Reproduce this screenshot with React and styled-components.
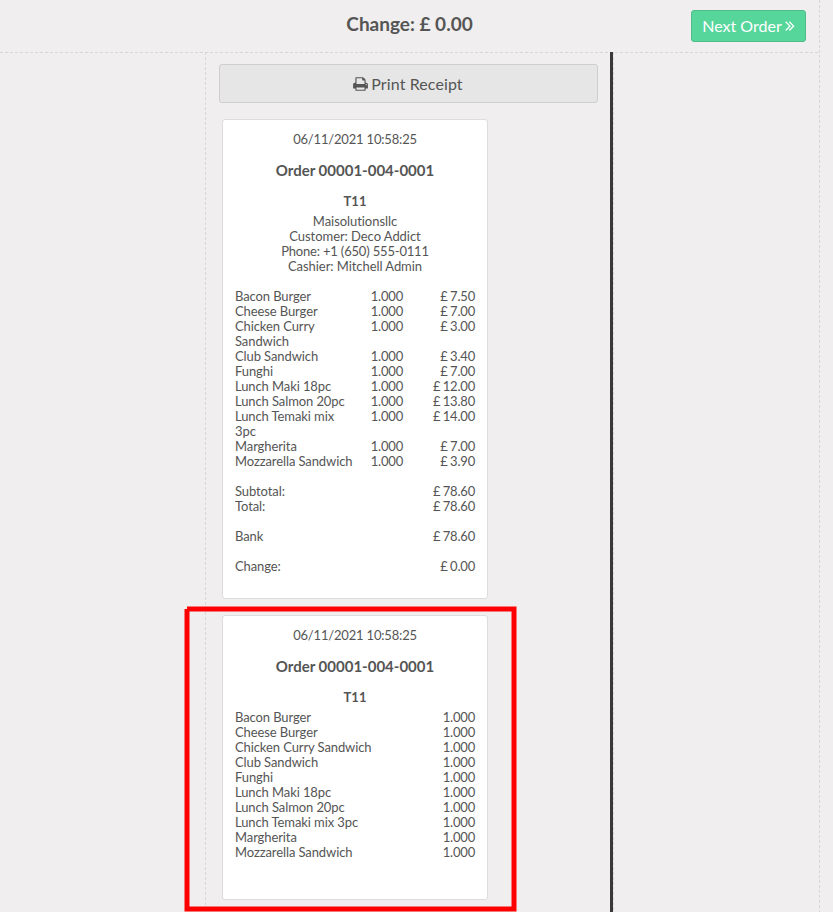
import React from "react";
import styled, { createGlobalStyle } from "styled-components";

const GlobalStyle = createGlobalStyle`
  * { box-sizing: border-box; }
  body { margin: 0; background: #f0eeee; }
`;

const dash = (direction, color = "#d8d7d7") =>
  `repeating-linear-gradient(${direction}, ${color} 0 3px, transparent 3px 5px)`;

const Screen = styled.div`
  position: relative;
  width: 833px;
  height: 912px;
  overflow: hidden;
  background: #f0eeee;
  color: #555555;
  font-family: Lato, sans-serif;
  font-variant-ligatures: none;
`;

const Frame = styled.div`
  display: flex;
  flex-direction: column;
  width: 820px;
  height: 912px;
  background: ${dash("to bottom")} right top / 1px 100% no-repeat;
`;

const Header = styled.header`
  display: grid;
  grid-template-columns: 1fr auto 1fr;
  align-items: start;
  flex: none;
  height: 53px;
  padding: 10px 14px 0 13px;
  background: ${dash("to right")} left bottom / 100% 1px no-repeat;
`;

const Title = styled.h1`
  grid-column: 2;
  margin: 0;
  padding-top: 2px;
  font-size: 19px;
  line-height: 24px;
  font-weight: 700;
`;

const NextButton = styled.button`
  justify-self: end;
  display: flex;
  align-items: center;
  justify-content: center;
  gap: 3px;
  width: 115px;
  height: 32px;
  padding: 0 0 1px;
  border: 1px solid #50bc8b;
  border-radius: 3px;
  background: #57d69c;
  color: #ffffff;
  font: 16px/29px Lato, sans-serif;
`;

const Columns = styled.div`
  display: flex;
  flex: 1;
  margin-top: -1px;
`;

const Gutter = styled.div`
  width: 205px;
`;

const ReceiptColumn = styled.main`
  width: 409px;
  padding: 12px 16px 0 14px;
  background:
    ${dash("to bottom")} left top / 1px 100% no-repeat,
    linear-gradient(#393939, #393939) 405px 0 / 3px 100% no-repeat,
    ${dash("to bottom")} 408px 0 / 1px 100% no-repeat;
`;

const PrintButton = styled.button`
  display: flex;
  align-items: center;
  justify-content: center;
  gap: 3px;
  width: 379px;
  height: 39px;
  padding: 0 1px 0 0;
  border: 1px solid #cecece;
  border-radius: 3px;
  background: #e6e6e6;
  color: #555555;
  font: 16px/20px Lato, sans-serif;
  letter-spacing: 0.1px;
`;

const Ticket = styled.article`
  width: 266px;
  height: ${(p) => p.$height}px;
  margin: 16px 0 0 3px;
  padding: 12px 12px 0;
  border: 1px solid #dddddd;
  border-radius: 3px;
  background: #ffffff;
  font-size: 13px;
  line-height: 15px;
  letter-spacing: -0.1px;
`;

const Centered = styled.div`
  text-align: center;
  letter-spacing: ${(p) => (p.$numeric ? "-0.18px" : "-0.06px")};
`;

const OrderName = styled.h2`
  margin: 14px 0 0;
  font-size: 15px;
  line-height: 18px;
  font-weight: 700;
  letter-spacing: 0;
  text-align: center;
`;

const TableName = styled.h3`
  margin: 15px 0 5px;
  font-size: 13px;
  line-height: 15px;
  font-weight: 700;
  letter-spacing: 0;
  text-align: center;
`;

const Lines = styled.div`
  margin-top: ${(p) => p.$gap || 0}px;
`;

const Line = styled.div`
  display: grid;
  grid-template-columns: ${(p) => (p.$priced ? "120px 48px 72px" : "1fr auto")};
`;

const Amount = styled.span`
  text-align: right;
  white-space: nowrap;
  letter-spacing: -0.2px;
  word-spacing: -0.6px;
`;

const Highlight = styled.div`
  position: absolute;
  left: 184px;
  top: 606px;
  width: 333px;
  height: 306px;
  pointer-events: none;

  svg { display: block; }
`;

const items = [
  ["Bacon Burger", "7.50"],
  ["Cheese Burger", "7.00"],
  ["Chicken Curry Sandwich", "3.00"],
  ["Club Sandwich", "3.40"],
  ["Funghi", "7.00"],
  ["Lunch Maki 18pc", "12.00"],
  ["Lunch Salmon 20pc", "13.80"],
  ["Lunch Temaki mix 3pc", "14.00"],
  ["Margherita", "7.00"],
  ["Mozzarella Sandwich", "3.90"],
];

const PrintIcon = () => (
  <svg width="15" height="16" viewBox="0 0 1664 1792" fill="currentColor">
    <path d="M384 1536h896v-256h-896v256zM384 896h896v-384h-160q-40 0-68-28t-28-68v-160h-640v640zM1536 960q0-26-19-45t-45-19-45 19-19 45 19 45 45 19 45-19 19-45zM1664 960v416q0 13-9.5 22.500t-22.500 9.500h-224v160q0 40-28 68t-68 28h-960q-40 0-68-28t-28-68v-160h-224q-13 0-22.500-9.500t-9.500-22.500v-416q0-79 56.500-135.500t135.500-56.500h64v-544q0-40 28-68t68-28h672q40 0 88 20t76 48l152 152q28 28 48 76t20 88v256h64q79 0 135.500 56.500t56.500 135.500z" />
  </svg>
);

const DoubleAngle = () => (
  <svg width="10" height="17" viewBox="0 0 1008 1792" fill="currentColor">
    <path d="M595 960q0 13-10 23l-466 466q-10 10-23 10t-23-10l-50-50q-10-10-10-23t10-23l393-393-393-393q-10-10-10-23t10-23l50-50q10-10 23-10t23 10l466 466q10 10 10 23zM979 960q0 13-10 23l-466 466q-10 10-23 10t-23-10l-50-50q-10-10-10-23t10-23l393-393-393-393q-10-10-10-23t10-23l50-50q10-10 23-10t23 10l466 466q10 10 10 23z" />
  </svg>
);

const TicketHeading = () => (
  <>
    <Centered $numeric>06/11/2021 10:58:25</Centered>
    <OrderName>Order 00001-004-0001</OrderName>
    <TableName>T11</TableName>
  </>
);

const Total = ({ label, value }) => (
  <Line>
    <span>{label}</span>
    <Amount>£ {value}</Amount>
  </Line>
);

export default function App() {
  return (
    <Screen>
      <GlobalStyle />
      <Frame>
        <Header>
          <Title>Change: £ 0.00</Title>
          <NextButton>
            Next Order
            <DoubleAngle />
          </NextButton>
        </Header>
        <Columns>
          <Gutter />
          <ReceiptColumn>
            <PrintButton>
              <PrintIcon />
              Print Receipt
            </PrintButton>
            <Ticket $height={480}>
              <TicketHeading />
              <Centered>Maisolutionsllc</Centered>
              <Centered>Customer: Deco Addict</Centered>
              <Centered $numeric>Phone: +1 (650) 555-0111</Centered>
              <Centered>Cashier: Mitchell Admin</Centered>
              <Lines $gap={15}>
                {items.map(([name, price]) => (
                  <Line key={name} $priced>
                    <span>{name}</span>
                    <Amount>1.000</Amount>
                    <Amount>£ {price}</Amount>
                  </Line>
                ))}
              </Lines>
              <Lines $gap={15}>
                <Total label="Subtotal:" value="78.60" />
                <Total label="Total:" value="78.60" />
              </Lines>
              <Lines $gap={15}>
                <Total label="Bank" value="78.60" />
              </Lines>
              <Lines $gap={15}>
                <Total label="Change:" value="0.00" />
              </Lines>
            </Ticket>
            <Ticket $height={285}>
              <TicketHeading />
              <Lines>
                {items.map(([name]) => (
                  <Line key={name}>
                    <span>{name}</span>
                    <Amount>1.000</Amount>
                  </Line>
                ))}
              </Lines>
            </Ticket>
          </ReceiptColumn>
        </Columns>
      </Frame>
      <Highlight>
        <svg width="333" height="306" fill="none" stroke="#ff0000">
          <path d="M3 3H330V303H3V3" strokeWidth="5" />
        </svg>
      </Highlight>
    </Screen>
  );
}
